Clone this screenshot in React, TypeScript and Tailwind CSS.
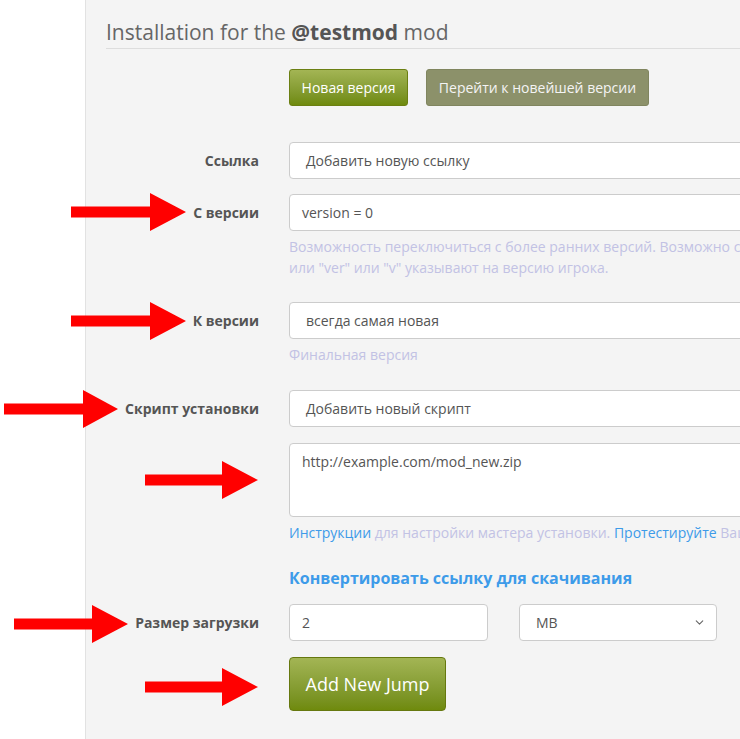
import React from 'react';
import { ChevronDown } from 'lucide-react';

interface ArrowProps {
  x: number;
  y: number;
  shaft: number;
  head: number;
}

// red annotation arrow, drawn over the form
function Arrow({ x, y, shaft, head }: ArrowProps) {
  const w = shaft + head;
  return (
    <svg
      className="absolute"
      style={{ left: x, top: y - 20 }}
      width={w}
      height={40}
      viewBox={`0 0 ${w} 40`}
    >
      <polygon
        points={`0,14.5 ${shaft},14.5 ${shaft},1 ${w},20 ${shaft},39 ${shaft},25.5 0,25.5`}
        fill="#ff0000"
      />
    </svg>
  );
}

function Label({ children }: { children: React.ReactNode }) {
  return (
    <div className="w-[183px] shrink-0 pr-[30px] text-right text-[14px] font-bold text-[#555]">
      {children}
    </div>
  );
}

function Field({ text, pad = 'pl-3' }: { text: string; pad?: string }) {
  return (
    <div
      className={`flex h-[37px] w-[520px] shrink-0 items-center rounded border border-[#ccc] bg-white ${pad} text-[14px] text-[#555]`}
    >
      {text}
    </div>
  );
}

export default function App() {
  return (
    <div className="relative flex h-[739px] w-[740px] overflow-hidden bg-white font-['Open_Sans',sans-serif]">
      <div className="w-[86px] shrink-0 border-r border-[#e2e2e2] bg-white" />
      <div className="flex-1 bg-[#f4f4f4] pl-[20px]">
        <div className="mt-[19px] border-b border-[#ddd] pb-[2px] text-[21px] leading-[27px] text-[#666]">
          Installation for the <span className="font-bold text-[#555]">@testmod</span> mod
        </div>

        <div className="mt-[20px] flex gap-[18px] pl-[183px]">
          <button className="h-[37px] w-[119px] rounded-[3px] border border-[#6b7f12] bg-gradient-to-b from-[#a3b554] to-[#6f8a0c] text-[14px] text-white">
            Новая версия
          </button>
          <button className="h-[37px] w-[223px] rounded-[3px] border border-[#80855f] bg-[#8c916a] text-[14px] text-[#f4f4f4]">
            Перейти к новейшей версии
          </button>
        </div>

        <div className="mt-[36px] flex items-center">
          <Label>Ссылка</Label>
          <Field text="Добавить новую ссылку" pad="pl-4" />
        </div>

        <div className="mt-[15px] flex items-center">
          <Label>С версии</Label>
          <Field text="version = 0" />
        </div>
        <div className="mt-[5px] whitespace-nowrap pl-[183px] text-[14px] leading-[21px] text-[#c2c2e4]">
          Возможность переключиться с более ранних версий. Возможно с помощью
          <br />
          или "ver" или "v" указывают на версию игрока.
        </div>

        <div className="mt-[24px] flex items-center">
          <Label>К версии</Label>
          <Field text="всегда самая новая" pad="pl-4" />
        </div>
        <div className="mt-[5px] pl-[183px] text-[14px] leading-[21px] text-[#c2c2e4]">Финальная версия</div>

        <div className="mt-[25px] flex items-center">
          <Label>Скрипт установки</Label>
          <Field text="Добавить новый скрипт" pad="pl-4" />
        </div>

        <div className="mt-[16px] pl-[183px]">
          <div className="h-[74px] w-[520px] rounded border border-[#ccc] bg-white pl-3 pt-[8px] text-[14px] leading-[20px] text-[#555]">
            http://example.com/mod_new.zip
          </div>
        </div>
        <div className="mt-[5px] whitespace-nowrap pl-[183px] text-[14px] leading-[21px] text-[#c2c2e4]">
          <span className="text-[#3d9be9]">Инструкции</span> для настройки мастера установки.{' '}
          <span className="text-[#3d9be9]">Протестируйте</span> Ваш скрипт
        </div>

        <div className="mt-[24px] pl-[183px] text-[16px] font-bold leading-[22px] text-[#3d9be9]">
          Конвертировать ссылку для скачивания
        </div>

        <div className="mt-[15px] flex items-center">
          <Label>Размер загрузки</Label>
          <div className="flex h-[37px] w-[199px] items-center rounded border border-[#ccc] bg-white pl-3 text-[14px] text-[#555]">
            2
          </div>
          <div className="ml-[31px] flex h-[37px] w-[198px] items-center justify-between rounded border border-[#ccc] bg-white pl-4 pr-[10px] text-[14px] text-[#555]">
            MB
            <ChevronDown className="h-[13px] w-[13px] text-[#666]" strokeWidth={2} />
          </div>
        </div>

        <div className="mt-[16px] pl-[183px]">
          <button className="h-[54px] w-[157px] rounded-[4px] border border-[#66780f] bg-gradient-to-b from-[#a3b554] to-[#6f8a0c] text-[18px] text-white">
            Add New Jump
          </button>
        </div>
      </div>

      <Arrow x={71} y={212} shaft={79} head={36} />
      <Arrow x={71} y={321} shaft={79} head={36} />
      <Arrow x={4} y={409} shaft={79} head={35} />
      <Arrow x={145} y={480} shaft={77} head={36} />
      <Arrow x={14} y={624} shaft={78} head={36} />
      <Arrow x={145} y={687} shaft={77} head={36} />
    </div>
  );
}
